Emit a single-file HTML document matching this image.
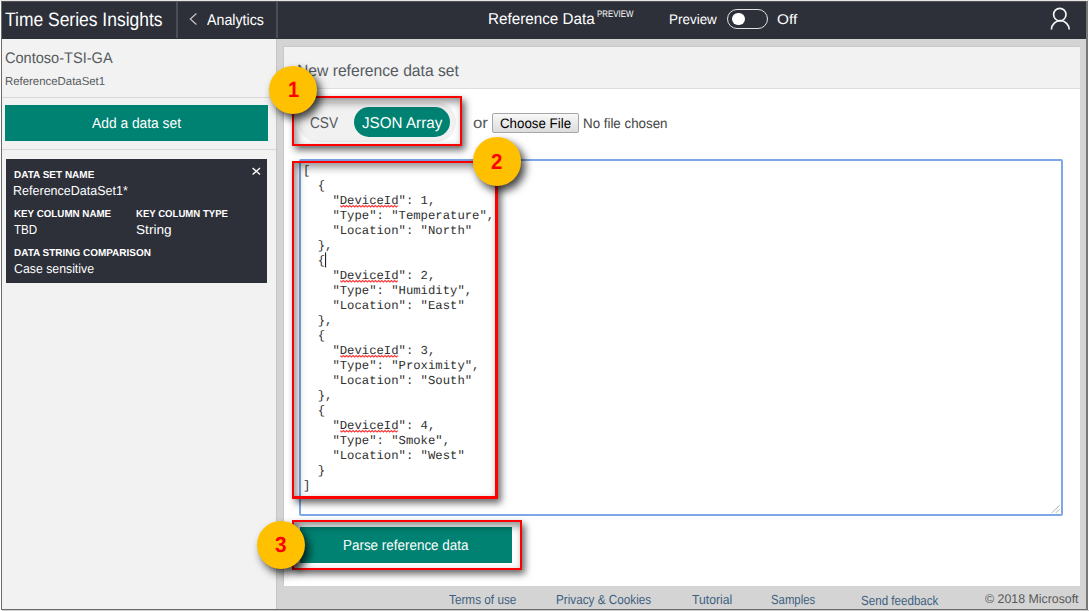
<!DOCTYPE html>
<html><head><meta charset="utf-8">
<style>
*{box-sizing:border-box;margin:0;padding:0}
html,body{width:1089px;height:611px;overflow:hidden;background:#fff;font-family:"Liberation Sans",sans-serif;text-rendering:geometricPrecision}
.a{position:absolute;white-space:nowrap}
.circ{position:absolute;width:48.5px;height:48.5px;border-radius:50%;background:#ffc000;box-shadow:4px 5px 8px rgba(0,0,0,.75)}
.rbox{position:absolute;border:2.5px solid #f00;box-shadow:3px 4px 7px rgba(0,0,0,.6), inset 3px 4px 8px rgba(0,0,0,.45)}
</style></head><body>
<div class="a" style="left:0;top:0;width:1089px;height:1px;background:#e6e6e6"></div><div class="a" style="left:2px;top:1px;width:1084px;height:37.5px;background:#2d3039"></div><div class="a" style="left:2px;top:1px;width:1084px;height:1px;background:#555"></div><div class="a" style="left:176px;top:2px;width:1.5px;height:36px;background:#4a4e55"></div><div class="a" style="left:276px;top:2px;width:1.5px;height:36px;background:#4a4e55"></div><div class="a" style="left:2px;top:38.5px;width:274px;height:571px;background:#f2f2f2"></div><div class="a" style="left:276px;top:38.5px;width:810px;height:571px;background:#d4d4d4;border-left:1.5px solid #c4c4c4"></div><div class="a" style="left:284px;top:47px;width:796px;height:539px;background:#fff;box-shadow:-1px -1px 0 #c8c8c8"></div><div class="a" style="left:284px;top:47px;width:796px;height:42px;background:#f2f2f2;border-bottom:1px solid #dedede"></div><div class="a" style="left:1px;top:1px;width:1px;height:609px;background:#6a6a6a"></div><div class="a" style="left:1086px;top:1px;width:2px;height:609px;background:#777"></div><div class="a" style="left:1px;top:609px;width:1087px;height:1px;background:#6a6a6a"></div><div class="a" style="left:2px;top:610px;width:1087px;height:1px;background:#d0d0d0"></div><div class="a" style="left:4.96px;top:11.11px;font-size:19.46px;line-height:19.46px;letter-spacing:0.000px;color:#fff;transform:scaleX(0.8984);transform-origin:0 0;">Time Series Insights</div>
<svg class="a" style="left:185px;top:10px" width="16" height="18" viewBox="185 10 16 18"><path d="M196.4 13.5L190.3 19L196.4 24.5" fill="none" stroke="#c4c5c8" stroke-width="1.2"/></svg><div class="a" style="left:207.41px;top:13.10px;font-size:15.57px;line-height:15.57px;letter-spacing:0.000px;color:#fff;transform:scaleX(0.9134);transform-origin:0 0;">Analytics</div>
<div class="a" style="left:487.94px;top:12.18px;font-size:15.72px;line-height:15.72px;letter-spacing:0.000px;color:#fff;transform:scaleX(0.9683);transform-origin:0 0;">Reference Data</div>
<div class="a" style="left:597.23px;top:10.45px;font-size:9.58px;line-height:9.58px;letter-spacing:0.000px;color:#fff;transform:scaleX(0.8236);transform-origin:0 0;">PREVIEW</div>
<div class="a" style="left:669.47px;top:13.16px;font-size:13.92px;line-height:13.92px;letter-spacing:0.000px;color:#fff;transform:scaleX(0.9670);transform-origin:0 0;">Preview</div>
<div class="a" style="left:727px;top:9.2px;width:41px;height:19.5px;border:1.6px solid #e2e2e2;border-radius:10px"></div><div class="a" style="left:732.3px;top:12.5px;width:12.6px;height:12.6px;border-radius:50%;background:#fff"></div><div class="a" style="left:776.85px;top:13.16px;font-size:13.92px;line-height:13.92px;letter-spacing:0.000px;color:#fff;transform:scaleX(1.1014);transform-origin:0 0;">Off</div>
<svg class="a" style="left:1040px;top:0" width="40" height="38" viewBox="1040 0 40 38"><circle cx="1059.8" cy="14.6" r="6.2" fill="none" stroke="#f4f4f4" stroke-width="1.7"/><path d="M1051.4 29.6A8.8 8.8 0 0 1 1069.2 29.6" fill="none" stroke="#f4f4f4" stroke-width="1.7"/></svg><div class="a" style="left:4.55px;top:51.05px;font-size:15.42px;line-height:15.42px;letter-spacing:0.000px;color:#555a60;transform:scaleX(0.9449);transform-origin:0 0;">Contoso-TSI-GA</div>
<div class="a" style="left:4.65px;top:76.91px;font-size:11.53px;line-height:11.53px;letter-spacing:0.000px;color:#555a60;transform:scaleX(0.9897);transform-origin:0 0;">ReferenceDataSet1</div>
<div class="a" style="left:2px;top:97px;width:274px;height:1px;background:#d8d8d8"></div><div class="a" style="left:5px;top:105px;width:263px;height:35.5px;background:#008272"></div><div class="a" style="left:92.09px;top:117.15px;font-size:14.67px;line-height:14.67px;letter-spacing:0.000px;color:#fff;transform:scaleX(0.9414);transform-origin:0 0;">Add a data set</div>
<div class="a" style="left:2px;top:148.5px;width:274px;height:1px;background:#d8d8d8"></div><div class="a" style="left:5.5px;top:159px;width:261.5px;height:124px;background:#2d3039"></div><div class="a" style="left:13.62px;top:170.99px;font-size:10.07px;line-height:10.07px;letter-spacing:0.000px;color:#fff;font-weight:bold;transform:scaleX(0.9932);transform-origin:0 0;">DATA SET NAME</div>
<div class="a" style="left:13.49px;top:183.72px;font-size:13.02px;line-height:13.02px;letter-spacing:0.000px;color:#fff;transform:scaleX(0.9623);transform-origin:0 0;">ReferenceDataSet1*</div>
<svg class="a" style="left:248px;top:164px" width="16" height="14" viewBox="248 164 16 14"><path d="M252.6 167.9L260 174.6M260 167.9L252.6 174.6" stroke="#fff" stroke-width="1.35"/></svg><div class="a" style="left:13.64px;top:209.99px;font-size:10.07px;line-height:10.07px;letter-spacing:0.000px;color:#fff;font-weight:bold;transform:scaleX(0.9726);transform-origin:0 0;">KEY COLUMN NAME</div>
<div class="a" style="left:135.74px;top:209.99px;font-size:10.07px;line-height:10.07px;letter-spacing:0.000px;color:#fff;font-weight:bold;transform:scaleX(0.9521);transform-origin:0 0;">KEY COLUMN TYPE</div>
<div class="a" style="left:14.37px;top:223.02px;font-size:13.02px;line-height:13.02px;letter-spacing:0.000px;color:#fff;transform:scaleX(0.8933);transform-origin:0 0;">TBD</div>
<div class="a" style="left:135.55px;top:223.02px;font-size:13.02px;line-height:13.02px;letter-spacing:0.000px;color:#fff;transform:scaleX(1.0480);transform-origin:0 0;">String</div>
<div class="a" style="left:13.62px;top:248.99px;font-size:10.07px;line-height:10.07px;letter-spacing:0.000px;color:#fff;font-weight:bold;transform:scaleX(0.9898);transform-origin:0 0;">DATA STRING COMPARISON</div>
<div class="a" style="left:13.74px;top:262.12px;font-size:13.02px;line-height:13.02px;letter-spacing:0.000px;color:#fff;transform:scaleX(0.9454);transform-origin:0 0;">Case sensitive</div>
<div class="a" style="left:296.93px;top:63.31px;font-size:16.32px;line-height:16.32px;letter-spacing:0.000px;color:#555a60;transform:scaleX(0.9598);transform-origin:0 0;">New reference data set</div>
<div class="a" style="left:297.5px;top:102.2px;width:158.2px;height:39.7px;border-radius:20px;background:#f1f1f1"></div><div class="a" style="left:310.29px;top:116.18px;font-size:15.72px;line-height:15.72px;letter-spacing:0.000px;color:#555a60;transform:scaleX(0.8688);transform-origin:0 0;">CSV</div>
<div class="a" style="left:354px;top:106.6px;width:95.9px;height:30.9px;border-radius:15.5px;background:#008272"></div><div class="a" style="left:362.31px;top:116.18px;font-size:15.72px;line-height:15.72px;letter-spacing:0.000px;color:#fff;transform:scaleX(0.9671);transform-origin:0 0;">JSON Array</div>
<div class="a" style="left:472.77px;top:116.15px;font-size:15.45px;line-height:15.45px;letter-spacing:0.000px;color:#555a60;transform:scaleX(1.0910);transform-origin:0 0;">or</div>
<div class="a" style="left:492px;top:112.7px;width:86.8px;height:20.8px;border:1px solid #a6a6a6;border-radius:2px;background:linear-gradient(#f8f8f8,#dcdcdc)"></div><div class="a" style="left:500.39px;top:117.22px;font-size:13.77px;line-height:13.77px;letter-spacing:0.000px;color:#000;transform:scaleX(0.9672);transform-origin:0 0;">Choose File</div>
<div class="a" style="left:583.09px;top:117.22px;font-size:13.77px;line-height:13.77px;letter-spacing:0.000px;color:#444;transform:scaleX(0.9685);transform-origin:0 0;">No file chosen</div>
<div class="a" style="left:299px;top:159px;width:764px;height:357px;border:2px solid #7ea7e6;border-radius:2px"></div><svg class="a" style="left:1048px;top:502px" width="12" height="12" viewBox="1048 502 12 12"><path d="M1052.3 512.5L1059.5 505.3M1056.2 512.5L1059.5 509.2" stroke="#777" stroke-width="1" stroke-dasharray="1 0.6"/></svg><pre class="a" style="white-space:pre;left:303px;top:164px;font-family:'Liberation Mono',monospace;font-size:12.25px;line-height:15px;color:#303030">[
  {
    &quot;DeviceId&quot;: 1,
    &quot;Type&quot;: &quot;Temperature&quot;,
    &quot;Location&quot;: &quot;North&quot;
  },
  {
    &quot;DeviceId&quot;: 2,
    &quot;Type&quot;: &quot;Humidity&quot;,
    &quot;Location&quot;: &quot;East&quot;
  },
  {
    &quot;DeviceId&quot;: 3,
    &quot;Type&quot;: &quot;Proximity&quot;,
    &quot;Location&quot;: &quot;South&quot;
  },
  {
    &quot;DeviceId&quot;: 4,
    &quot;Type&quot;: &quot;Smoke&quot;,
    &quot;Location&quot;: &quot;West&quot;
  }
]</pre><svg class="a" style="left:0;top:0" width="1089" height="611"><polyline points="340.20,205.60 341.80,207.00 343.40,205.60 345.00,207.00 346.60,205.60 348.20,207.00 349.80,205.60 351.40,207.00 353.00,205.60 354.60,207.00 356.20,205.60 357.80,207.00 359.40,205.60 361.00,207.00 362.60,205.60 364.20,207.00 365.80,205.60 367.40,207.00 369.00,205.60 370.60,207.00 372.20,205.60 373.80,207.00 375.40,205.60 377.00,207.00 378.60,205.60 380.20,207.00 381.80,205.60 383.40,207.00 385.00,205.60 386.60,207.00 388.20,205.60 389.80,207.00 391.40,205.60 393.00,207.00 394.60,205.60 396.20,207.00 397.80,205.60" fill="none" stroke="#ff3a3a" stroke-width="1.2"/><polyline points="340.20,280.60 341.80,282.00 343.40,280.60 345.00,282.00 346.60,280.60 348.20,282.00 349.80,280.60 351.40,282.00 353.00,280.60 354.60,282.00 356.20,280.60 357.80,282.00 359.40,280.60 361.00,282.00 362.60,280.60 364.20,282.00 365.80,280.60 367.40,282.00 369.00,280.60 370.60,282.00 372.20,280.60 373.80,282.00 375.40,280.60 377.00,282.00 378.60,280.60 380.20,282.00 381.80,280.60 383.40,282.00 385.00,280.60 386.60,282.00 388.20,280.60 389.80,282.00 391.40,280.60 393.00,282.00 394.60,280.60 396.20,282.00 397.80,280.60" fill="none" stroke="#ff3a3a" stroke-width="1.2"/><polyline points="340.20,355.60 341.80,357.00 343.40,355.60 345.00,357.00 346.60,355.60 348.20,357.00 349.80,355.60 351.40,357.00 353.00,355.60 354.60,357.00 356.20,355.60 357.80,357.00 359.40,355.60 361.00,357.00 362.60,355.60 364.20,357.00 365.80,355.60 367.40,357.00 369.00,355.60 370.60,357.00 372.20,355.60 373.80,357.00 375.40,355.60 377.00,357.00 378.60,355.60 380.20,357.00 381.80,355.60 383.40,357.00 385.00,355.60 386.60,357.00 388.20,355.60 389.80,357.00 391.40,355.60 393.00,357.00 394.60,355.60 396.20,357.00 397.80,355.60" fill="none" stroke="#ff3a3a" stroke-width="1.2"/><polyline points="340.20,430.60 341.80,432.00 343.40,430.60 345.00,432.00 346.60,430.60 348.20,432.00 349.80,430.60 351.40,432.00 353.00,430.60 354.60,432.00 356.20,430.60 357.80,432.00 359.40,430.60 361.00,432.00 362.60,430.60 364.20,432.00 365.80,430.60 367.40,432.00 369.00,430.60 370.60,432.00 372.20,430.60 373.80,432.00 375.40,430.60 377.00,432.00 378.60,430.60 380.20,432.00 381.80,430.60 383.40,432.00 385.00,430.60 386.60,432.00 388.20,430.60 389.80,432.00 391.40,430.60 393.00,432.00 394.60,430.60 396.20,432.00 397.80,430.60" fill="none" stroke="#ff3a3a" stroke-width="1.2"/><rect x="325" y="252.4" width="1.1" height="15" fill="#222"/></svg><div class="a" style="left:300px;top:526.6px;width:212.2px;height:36.1px;background:#008272"></div><div class="a" style="left:343.27px;top:539.15px;font-size:14.52px;line-height:14.52px;letter-spacing:0.000px;color:#fff;transform:scaleX(0.9254);transform-origin:0 0;">Parse reference data</div>
<div class="a" style="left:449.07px;top:592.52px;font-size:13.17px;line-height:13.17px;letter-spacing:0.000px;color:#3e5f80;transform:scaleX(0.8945);transform-origin:0 0;">Terms of use</div>
<div class="a" style="left:556.03px;top:592.52px;font-size:13.17px;line-height:13.17px;letter-spacing:0.000px;color:#3e5f80;transform:scaleX(0.8917);transform-origin:0 0;">Privacy &amp; Cookies</div>
<div class="a" style="left:691.67px;top:592.52px;font-size:13.17px;line-height:13.17px;letter-spacing:0.000px;color:#3e5f80;transform:scaleX(0.9262);transform-origin:0 0;">Tutorial</div>
<div class="a" style="left:770.93px;top:592.52px;font-size:13.17px;line-height:13.17px;letter-spacing:0.000px;color:#3e5f80;transform:scaleX(0.8626);transform-origin:0 0;">Samples</div>
<div class="a" style="left:861.31px;top:594.42px;font-size:13.17px;line-height:13.17px;letter-spacing:0.000px;color:#3e5f80;transform:scaleX(0.8818);transform-origin:0 0;">Send feedback</div>
<div class="a" style="left:984.57px;top:593.07px;font-size:12.58px;line-height:12.58px;letter-spacing:0.000px;color:#5a5a5a;transform:scaleX(0.9820);transform-origin:0 0;">© 2018 Microsoft</div>
<div class="rbox" style="left:292px;top:96px;width:170px;height:50px"></div><div class="rbox" style="left:292px;top:160.5px;width:206px;height:338px;border-bottom-width:3px;border-right-width:3px"></div><div class="rbox" style="left:292px;top:520px;width:230px;height:50px"></div><div class="circ" style="left:268.65px;top:65.85px"></div>
<div class="a" style="left:287.63px;top:79.40px;font-size:22.01px;line-height:22.01px;letter-spacing:0.000px;color:#f00;font-weight:bold;transform:scaleX(0.9117);transform-origin:0 0;">1</div>
<div class="circ" style="left:472.55px;top:137.45px"></div>
<div class="a" style="left:491.49px;top:151.20px;font-size:21.56px;line-height:21.56px;letter-spacing:0.000px;color:#f00;font-weight:bold;transform:scaleX(0.9486);transform-origin:0 0;">2</div>
<div class="circ" style="left:256.65px;top:520.95px"></div>
<div class="a" style="left:275.49px;top:534.20px;font-size:21.86px;line-height:21.86px;letter-spacing:0.000px;color:#f00;font-weight:bold;transform:scaleX(0.9500);transform-origin:0 0;">3</div>
</body></html>
